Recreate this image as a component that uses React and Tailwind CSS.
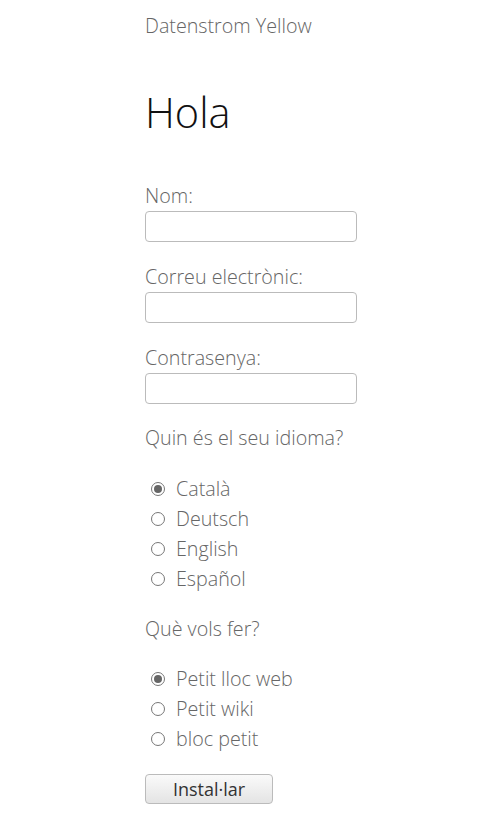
import React, { useState } from 'react';

function Radio({ checked, label, onClick }) {
  return (
    <label className="flex items-center h-[30px] pl-[6px] cursor-pointer" onClick={onClick}>
      <span className="w-[14px] h-[14px] rounded-full border-[1.5px] border-[#777] bg-white flex items-center justify-center mr-[11px]">
        {checked && <span className="w-[8px] h-[8px] rounded-full bg-[#666]" />}
      </span>
      <span>{label}</span>
    </label>
  );
}

export default function App() {
  const [language, setLanguage] = useState('ca');
  const [feature, setFeature] = useState('website');

  const languages = [
    ['ca', 'Català'],
    ['de', 'Deutsch'],
    ['en', 'English'],
    ['es', 'Español'],
  ];
  const features = [
    ['website', 'Petit lloc web'],
    ['wiki', 'Petit wiki'],
    ['blog', 'bloc petit'],
  ];

  return (
    <div className="min-h-screen bg-white text-[#666] font-['Open_Sans',sans-serif] font-light text-[19.7px] leading-[30px]">
      <div className="w-[212px] ml-[145px]">
        {/* Header */}
        <div className="pt-[11px] h-[41px] whitespace-nowrap">Datenstrom Yellow</div>

        {/* Content */}
        <h1 className="text-[41.5px] leading-[60px] text-[#111] mt-[41px] mb-[39px]">Hola</h1>

        <form className="flex flex-col whitespace-nowrap">
          <label className="block">Nom:</label>
          <input type="text" className="w-[212px] h-[31px] border border-[#bbb] rounded-[4px] bg-white" />

          <label className="block mt-[20px]">Correu electrònic:</label>
          <input type="text" className="w-[212px] h-[31px] border border-[#bbb] rounded-[4px] bg-white" />

          <label className="block mt-[20px]">Contrasenya:</label>
          <input type="password" className="w-[212px] h-[31px] border border-[#bbb] rounded-[4px] bg-white" />

          <p className="mt-[19px]">Quin és el seu idioma?</p>
          <div className="mt-[21px]">
            {languages.map(([key, name]) => (
              <Radio key={key} checked={language === key} label={name} onClick={() => setLanguage(key)} />
            ))}
          </div>

          <p className="mt-[20px]">Què vols fer?</p>
          <div className="mt-[20px]">
            {features.map(([key, name]) => (
              <Radio key={key} checked={feature === key} label={name} onClick={() => setFeature(key)} />
            ))}
          </div>

          <div className="mt-[20px]">
            <button type="button" className="w-[128px] h-[30px] border border-[#bbb] rounded-[4px] bg-gradient-to-b from-[#fafafa] to-[#e4e4e4] text-[#333] font-normal text-[18px] leading-[28px]">
              Instal·lar
            </button>
          </div>
        </form>
      </div>
    </div>
  );
}
